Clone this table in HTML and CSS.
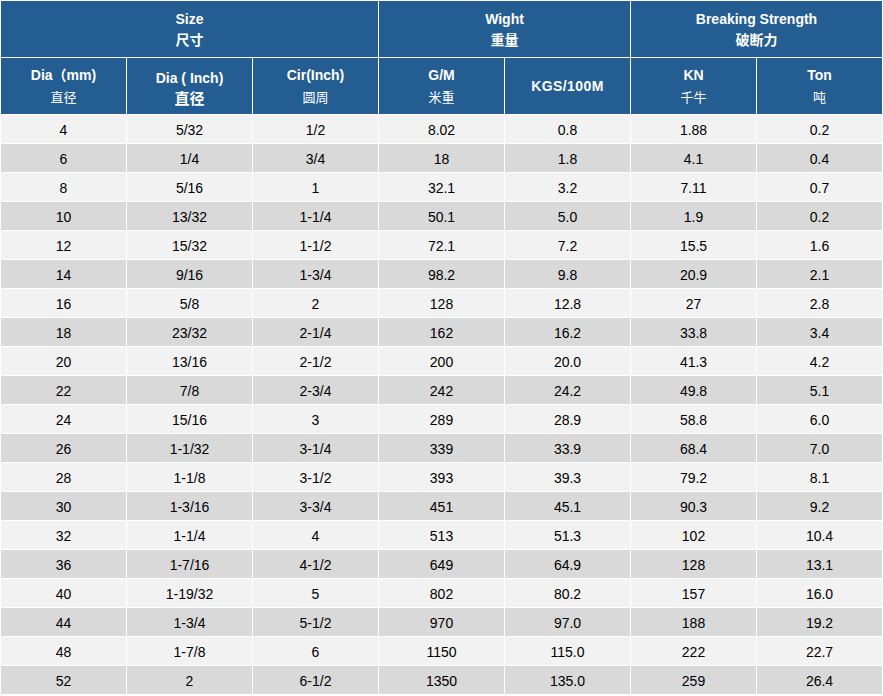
FILE: index.html
```html
<!DOCTYPE html>
<html lang="en">
<head>
<meta charset="utf-8">
<title>Rope specification</title>
<link rel="stylesheet" href="styles.css">
</head>
<body>
<table class="spec">
  <colgroup>
    <col class="c"><col class="c"><col class="c"><col class="c"><col class="c"><col class="c"><col class="c">
  </colgroup>
  <thead>
    <tr class="h1">
      <th colspan="3"><span class="en">Size</span><span class="cn">尺寸</span></th>
      <th colspan="2"><span class="en">Wight</span><span class="cn">重量</span></th>
      <th colspan="2"><span class="en">Breaking Strength</span><span class="cn">破断力</span></th>
    </tr>
    <tr class="h2">
      <th><span class="en">Dia（mm)</span><span class="cn">直径</span></th>
      <th class="big"><span class="en">Dia ( Inch)</span><span class="cn">直径</span></th>
      <th><span class="en">Cir(Inch)</span><span class="cn">圆周</span></th>
      <th><span class="en">G/M</span><span class="cn">米重</span></th>
      <th><span class="en spaced">KGS/100M</span></th>
      <th><span class="en">KN</span><span class="cn">千牛</span></th>
      <th><span class="en">Ton</span><span class="cn">吨</span></th>
    </tr>
  </thead>
  <tbody>
    <tr><td>4</td><td>5/32</td><td>1/2</td><td>8.02</td><td>0.8</td><td>1.88</td><td>0.2</td></tr>
    <tr><td>6</td><td>1/4</td><td>3/4</td><td>18</td><td>1.8</td><td>4.1</td><td>0.4</td></tr>
    <tr><td>8</td><td>5/16</td><td>1</td><td>32.1</td><td>3.2</td><td>7.11</td><td>0.7</td></tr>
    <tr><td>10</td><td>13/32</td><td>1-1/4</td><td>50.1</td><td>5.0</td><td>1.9</td><td>0.2</td></tr>
    <tr><td>12</td><td>15/32</td><td>1-1/2</td><td>72.1</td><td>7.2</td><td>15.5</td><td>1.6</td></tr>
    <tr><td>14</td><td>9/16</td><td>1-3/4</td><td>98.2</td><td>9.8</td><td>20.9</td><td>2.1</td></tr>
    <tr><td>16</td><td>5/8</td><td>2</td><td>128</td><td>12.8</td><td>27</td><td>2.8</td></tr>
    <tr><td>18</td><td>23/32</td><td>2-1/4</td><td>162</td><td>16.2</td><td>33.8</td><td>3.4</td></tr>
    <tr><td>20</td><td>13/16</td><td>2-1/2</td><td>200</td><td>20.0</td><td>41.3</td><td>4.2</td></tr>
    <tr><td>22</td><td>7/8</td><td>2-3/4</td><td>242</td><td>24.2</td><td>49.8</td><td>5.1</td></tr>
    <tr><td>24</td><td>15/16</td><td>3</td><td>289</td><td>28.9</td><td>58.8</td><td>6.0</td></tr>
    <tr><td>26</td><td>1-1/32</td><td>3-1/4</td><td>339</td><td>33.9</td><td>68.4</td><td>7.0</td></tr>
    <tr><td>28</td><td>1-1/8</td><td>3-1/2</td><td>393</td><td>39.3</td><td>79.2</td><td>8.1</td></tr>
    <tr><td>30</td><td>1-3/16</td><td>3-3/4</td><td>451</td><td>45.1</td><td>90.3</td><td>9.2</td></tr>
    <tr><td>32</td><td>1-1/4</td><td>4</td><td>513</td><td>51.3</td><td>102</td><td>10.4</td></tr>
    <tr><td>36</td><td>1-7/16</td><td>4-1/2</td><td>649</td><td>64.9</td><td>128</td><td>13.1</td></tr>
    <tr><td>40</td><td>1-19/32</td><td>5</td><td>802</td><td>80.2</td><td>157</td><td>16.0</td></tr>
    <tr><td>44</td><td>1-3/4</td><td>5-1/2</td><td>970</td><td>97.0</td><td>188</td><td>19.2</td></tr>
    <tr><td>48</td><td>1-7/8</td><td>6</td><td>1150</td><td>115.0</td><td>222</td><td>22.7</td></tr>
    <tr><td>52</td><td>2</td><td>6-1/2</td><td>1350</td><td>135.0</td><td>259</td><td>26.4</td></tr>
  </tbody>
</table>
</body>
</html>
```

FILE: styles.css
```css
html, body {
  margin: 0;
  padding: 0;
  background: #ffffff;
}

.spec {
  width: 883px;
  table-layout: fixed;
  border-collapse: separate;
  border-spacing: 1px;
  background: #ffffff;
  font-family: "Liberation Sans", Arial, "Noto Sans CJK SC", sans-serif;
  font-size: 14px;
  color: #000000;
}

.spec th,
.spec td {
  padding: 0;
  text-align: center;
  vertical-align: middle;
}

.spec th {
  background: #245d91;
  color: #ffffff;
}

.spec .en,
.spec .cn {
  display: block;
}

.h1 th {
  height: 56px;
}

.h1 .en {
  font-weight: bold;
  line-height: 20px;
}

.h1 .cn {
  font-weight: bold;
  font-size: 14px;
  line-height: 20px;
  font-family: "Noto Sans CJK SC", sans-serif;
}

.h2 th {
  height: 56px;
}

.h2 .en {
  font-weight: bold;
  line-height: 22px;
}

.h2 .cn {
  font-weight: normal;
  font-size: 13px;
  line-height: 22px;
  font-family: "Noto Sans CJK SC", sans-serif;
}

.h2 .big .en {
  font-size: 14px;
  line-height: 20px;
  padding-top: 4px;
}

.h2 .big .cn {
  font-size: 15px;
  font-weight: bold;
  line-height: 20px;
}

.spaced {
  letter-spacing: 0.4px;
}

.spec td {
  height: 28px;
  line-height: 16px;
  padding-top: 1px;
  box-sizing: border-box;
}

.spec tbody tr:nth-child(odd) td {
  background: #f2f2f2;
}

.spec tbody tr:nth-child(even) td {
  background: #d9d9d9;
}
```
